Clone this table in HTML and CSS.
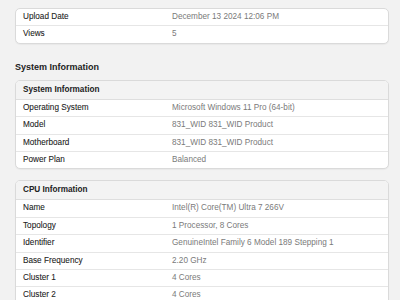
FILE: index.html
```html
<!DOCTYPE html>
<html>
<head>
<meta charset="utf-8">
<link rel="stylesheet" href="styles.css">
</head>
<body>
<div class="page">
  <div class="card">
    <div class="row"><span class="label">Upload Date</span><span class="value">December 13 2024 12:06 PM</span></div>
    <div class="row"><span class="label">Views</span><span class="value">5</span></div>
  </div>

  <h2 class="section-title">System Information</h2>

  <div class="card">
    <div class="card-header">System Information</div>
    <div class="row"><span class="label">Operating System</span><span class="value">Microsoft Windows 11 Pro (64-bit)</span></div>
    <div class="row"><span class="label">Model</span><span class="value">831_WID 831_WID Product</span></div>
    <div class="row"><span class="label">Motherboard</span><span class="value">831_WID 831_WID Product</span></div>
    <div class="row"><span class="label">Power Plan</span><span class="value">Balanced</span></div>
  </div>

  <div class="card card-gap">
    <div class="card-header">CPU Information</div>
    <div class="row"><span class="label">Name</span><span class="value">Intel(R) Core(TM) Ultra 7 266V</span></div>
    <div class="row"><span class="label">Topology</span><span class="value">1 Processor, 8 Cores</span></div>
    <div class="row"><span class="label">Identifier</span><span class="value">GenuineIntel Family 6 Model 189 Stepping 1</span></div>
    <div class="row"><span class="label">Base Frequency</span><span class="value">2.20 GHz</span></div>
    <div class="row"><span class="label">Cluster 1</span><span class="value">4 Cores</span></div>
    <div class="row"><span class="label">Cluster 2</span><span class="value">4 Cores</span></div>
  </div>
</div>
</body>
</html>
```

FILE: styles.css
```css
html, body {
  margin: 0;
  padding: 0;
  background: #f2f2f2;
}
body {
  font-family: "Liberation Sans", Arial, sans-serif;
  font-size: 8.2px;
  color: #222;
  overflow: hidden;
}
.page {
  padding: 8px 11px 0 15px;
}
.card {
  background: #fff;
  border: 1px solid #dadada;
  border-radius: 5px;
  overflow: hidden;
  box-shadow: 0 1px 1px rgba(0,0,0,0.04);
}
.card-gap {
  margin-top: 11px;
}
.card-header {
  background: #f3f3f3;
  height: 18px;
  line-height: 17px;
  padding-left: 7px;
  font-weight: bold;
  color: #222;
  border-bottom: 1px solid #dedede;
}
.row {
  display: grid;
  grid-template-columns: 149px 1fr;
  height: 16.4px;
  line-height: 16.4px;
  padding-left: 7px;
  border-top: 1px solid #e6e6e6;
}
.row:first-child,
.card-header + .row {
  border-top: none;
}
.label {
  color: #222;
  -webkit-text-stroke: 0.08px #222;
}
.value {
  color: #7a7a7a;
}
.section-title {
  margin: 17px 0 7px 0;
  font-size: 9px;
  font-weight: bold;
  color: #222;
  line-height: 12px;
}
```
